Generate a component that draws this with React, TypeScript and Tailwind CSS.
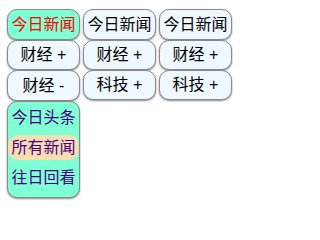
import React from "react";

const btn =
  "h-[30px] flex items-center justify-center rounded-[10px] border border-[#8a8a8a] shadow-[0_1px_2px_#888] text-[16px] leading-none";

const Column: React.FC<{ items: string[] }> = ({ items }) => (
  <div className="w-[73px] flex flex-col">
    <div className={`${btn} h-[31px] bg-[#f0f8ff] text-black`}>今日新闻</div>
    {items.map((t) => (
      <div key={t} className={`${btn} bg-[#f0f8ff] text-black`}>
        {t}
      </div>
    ))}
  </div>
);

export default function App() {
  return (
    <div
      className="w-[240px] h-[211px] bg-white flex items-start gap-[3px] pl-[7px] pt-[9px]"
      style={{ fontFamily: '"Liberation Sans", "Noto Sans CJK SC", sans-serif' }}
    >
      <div className="w-[73px] flex flex-col">
        <div className={`${btn} h-[31px] bg-[#7fffd4] text-[#ff0000]`}>今日新闻</div>
        <div className={`${btn} bg-[#f0f8ff] text-black`}>财经 +</div>
        <div className={`${btn} h-[31px] bg-[#f0f8ff] text-black`}>财经 -</div>
        <div className="h-[97px] rounded-[10px] border border-[#8a8a8a] shadow-[0_1px_2px_#888] bg-[#7fffd4] flex flex-col py-[1px] text-[16px] text-[#4b0082]">
          <div className="h-[31px] flex items-center justify-center">今日头条</div>
          <div className="h-[26px] mt-[1px] flex items-center justify-center rounded-[10px] bg-[#f5deb3]">所有新闻</div>
          <div className="h-[36px] flex items-center justify-center">往日回看</div>
        </div>
      </div>
      <Column items={["财经 +", "科技 +"]} />
      <Column items={["财经 +", "科技 +"]} />
    </div>
  );
}
